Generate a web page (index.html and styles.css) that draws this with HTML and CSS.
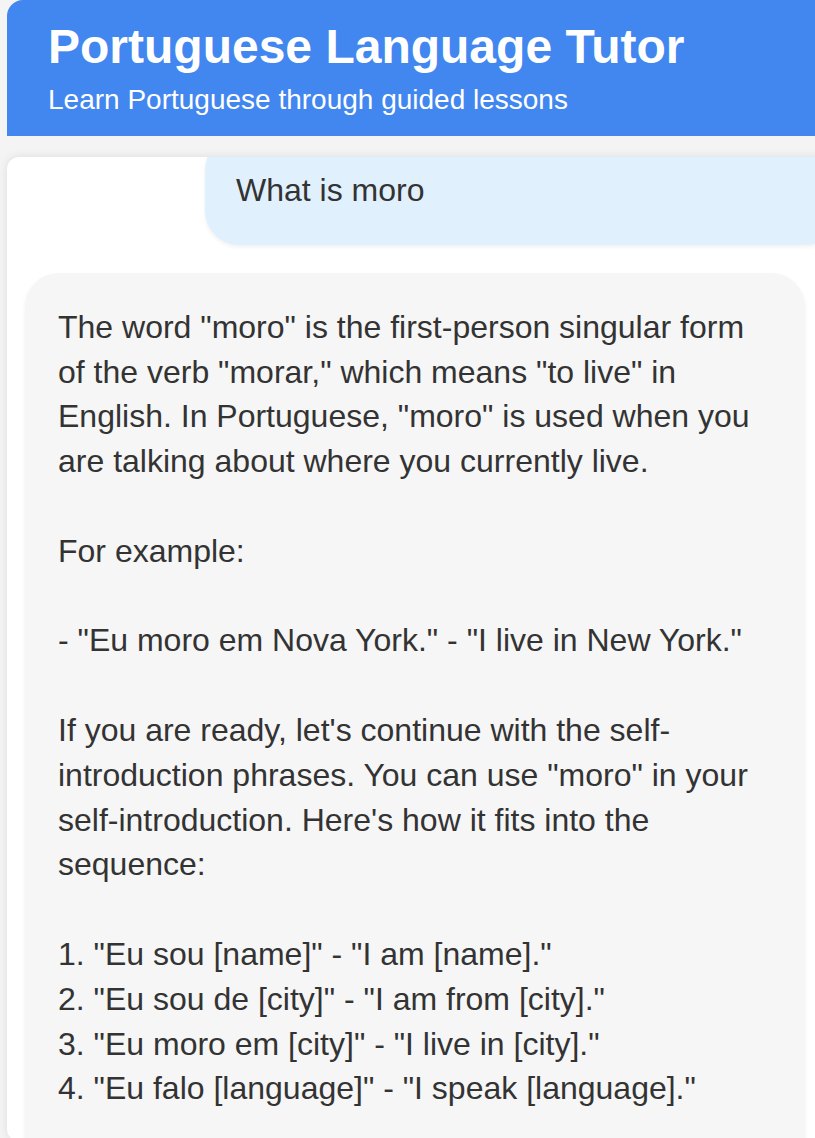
FILE: index.html
```html
<!DOCTYPE html>
<html lang="en">
<head>
<meta charset="utf-8">
<title>Portuguese Language Tutor</title>
<link rel="stylesheet" href="styles.css">
</head>
<body>
<div class="app">
  <header class="header">
    <h1 class="title">Portuguese Language Tutor</h1>
    <p class="subtitle">Learn Portuguese through guided lessons</p>
  </header>
  <main class="chat">
    <div class="thread">
      <div class="msg user">What is moro</div>
      <div class="msg bot">The word "moro" is the first-person singular form of the verb "morar," which means "to live" in English. In Portuguese, "moro" is used when you are talking about where you currently live.

For example:

- "Eu moro em Nova York." - "I live in New York."

If you are ready, let's continue with the self-introduction phrases. You can use "moro" in your self-introduction. Here's how it fits into the sequence:

1. "Eu sou [name]" - "I am [name]."
2. "Eu sou de [city]" - "I am from [city]."
3. "Eu moro em [city]" - "I live in [city]."
4. "Eu falo [language]" - "I speak [language]."</div>
    </div>
  </main>
</div>
</body>
</html>
```

FILE: styles.css
```css
html, body {
  margin: 0;
  height: 100%;
  overflow: hidden;
}

body {
  background: #f4f4f4;
  font-family: "Liberation Sans", Arial, sans-serif;
  color: #333;
}

.app {
  margin-left: 7px;
  width: 850px;
}

.header {
  background: #4286f0;
  color: #fff;
  border-radius: 16px 16px 0 0;
  padding: 19px 41px 20px;
}

.title {
  margin: 0 0 10px;
  font-size: 48px;
  line-height: 55px;
  font-weight: 700;
}

.subtitle {
  margin: 0;
  font-size: 28px;
  line-height: 32px;
}

.chat {
  margin-top: 21px;
  background: #fff;
  box-shadow: 0 0 10px rgba(0, 0, 0, 0.1);
  border-radius: 12px;
  height: 984px;
  overflow: hidden;
}

.thread {
  margin-top: -21px;
  padding: 0 18px;
  display: flex;
  flex-direction: column;
  gap: 28px;
}

.msg {
  font-size: 32px;
  line-height: 1.4;
  padding: 32px 33px;
  border-radius: 34px;
  box-sizing: border-box;
  box-shadow: 0 2px 4px rgba(0, 0, 0, 0.06);
}

.user {
  background: #e1f0fd;
  margin-left: 180px;
  padding-left: 31px;
}

.bot {
  background: #f6f6f6;
  width: 780px;
  white-space: pre-line;
  padding-bottom: 80px;
}
```
